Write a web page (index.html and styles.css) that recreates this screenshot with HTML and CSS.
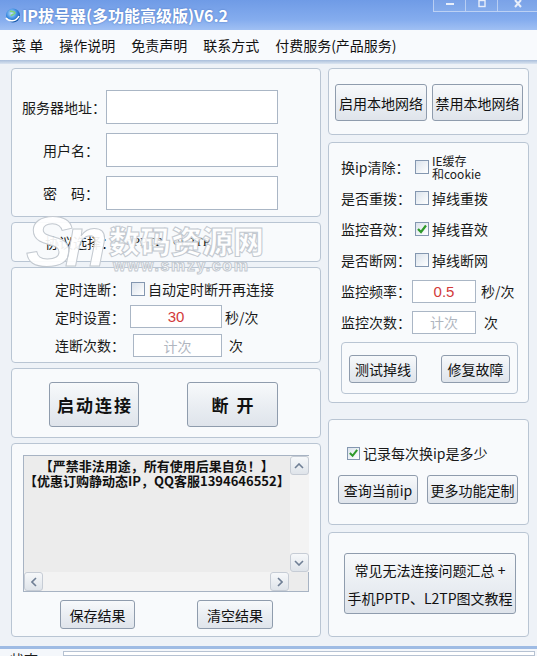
FILE: index.html
```html
<!DOCTYPE html>
<html lang="zh-CN">
<head>
<meta charset="utf-8">
<title>IP拔号器(多功能高级版)V6.2</title>
<link rel="stylesheet" href="styles.css">
</head>
<body>
<div class="window">
  <div class="titlebar">
    <svg class="appicon" viewBox="0 0 18 18" width="18" height="18">
      <defs>
        <radialGradient id="gl" cx="40%" cy="35%" r="65%">
          <stop offset="0" stop-color="#bfe3ff"/>
          <stop offset="0.6" stop-color="#3a8be0"/>
          <stop offset="1" stop-color="#1556a8"/>
        </radialGradient>
      </defs>
      <circle cx="10" cy="9.5" r="7" fill="url(#gl)"/>
      <path d="M3 12 C6 16 13 16 16 10" stroke="#fff" stroke-width="1.6" fill="none"/>
      <path d="M7 5 C9 6 11 5 12 7 C11 9 9 8 8 10" stroke="#7fd37a" stroke-width="1.6" fill="none"/>
    </svg>
    <span class="title">IP拔号器(多功能高级版)V6.2</span>
    <div class="winbtns">
      <span class="wb"><svg viewBox="0 0 12 8" width="12" height="8"><rect x="2" y="3" width="8" height="2" fill="#e8eefa"/></svg></span>
      <span class="wb"><svg viewBox="0 0 12 8" width="12" height="8"><rect x="3" y="0.5" width="6" height="6" fill="none" stroke="#e8eefa" stroke-width="1.4"/></svg></span>
      <span class="wb close"><svg viewBox="0 0 12 8" width="12" height="8"><path d="M3 0 L9 7 M9 0 L3 7" stroke="#e8eefa" stroke-width="2"/></svg></span>
    </div>
  </div>

  <div class="menubar">
    <span class="menu">菜&nbsp;单</span>
    <span class="menu">操作说明</span>
    <span class="menu">免责声明</span>
    <span class="menu">联系方式</span>
    <span class="menu">付费服务(产品服务)</span>
  </div>
  <div class="menushadow"></div>

  <div class="main">
    <div class="col col-left">
      <div class="group g-login">
        <span class="lbl lbl-long">服务器地址：</span><div class="input"></div>
        <span class="lbl lbl-short">用户名：</span><div class="input"></div>
        <span class="lbl lbl-short">密　码：</span><div class="input"></div>
      </div>

      <div class="group g-proto">
        <span class="proto-lbl">协议选择：</span>
        <span class="proto-opt">○PPTP</span>
        <span class="proto-opt">○L2TP</span>
      </div>

      <div class="group g-timer">
        <span class="lbl">定时连断：</span>
        <span class="chkrow span2"><span class="chk"></span><span class="chktext">自动定时断开再连接</span></span>
        <span class="lbl">定时设置：</span>
        <div class="input small red">30</div>
        <span class="unit">秒/次</span>
        <span class="lbl">连断次数：</span>
        <div class="input small gray shift">计次</div>
        <span class="unit unit-ci">次</span>
      </div>

      <div class="group g-connect">
        <button class="btn big b-start">启动连接</button>
        <button class="btn big b-stop">断&nbsp;开</button>
      </div>

      <div class="group g-log">
        <div class="logbox">
          <div class="logtop">
            <div class="logtext">
              <div>【严禁非法用途，所有使用后果自负！】</div>
              <div>【优惠订购静动态IP，QQ客服1394646552】</div>
            </div>
            <div class="vscroll">
              <span class="sbtn"><svg viewBox="0 0 10 6" width="10" height="6"><path d="M1 5 L5 1 L9 5" stroke="#6f7f95" stroke-width="1.6" fill="none"/></svg></span>
              <span class="vtrack"></span>
              <span class="sbtn"><svg viewBox="0 0 10 6" width="10" height="6"><path d="M1 1 L5 5 L9 1" stroke="#6f7f95" stroke-width="1.6" fill="none"/></svg></span>
            </div>
          </div>
          <div class="hscroll">
            <span class="sbtn"><svg viewBox="0 0 6 10" width="6" height="10"><path d="M5 1 L1 5 L5 9" stroke="#6f7f95" stroke-width="1.6" fill="none"/></svg></span>
            <span class="htrack"></span>
            <span class="sbtn"><svg viewBox="0 0 6 10" width="6" height="10"><path d="M1 1 L5 5 L1 9" stroke="#6f7f95" stroke-width="1.6" fill="none"/></svg></span>
            <span class="corner"></span>
          </div>
        </div>
        <div class="logbtns">
          <button class="btn b-save">保存结果</button>
          <button class="btn b-clear">清空结果</button>
        </div>
      </div>
    </div>

    <div class="col col-right">
      <div class="group r-net">
        <button class="btn b-net1">启用本地网络</button>
        <button class="btn b-net2">禁用本地网络</button>
      </div>

      <div class="group r-monitor">
        <div class="mon-grid">
          <span class="lbl">换ip清除：</span>
          <span class="chkrow"><span class="chk"></span><span class="chktext two">IE缓存<br>和cookie</span></span>
          <span class="lbl">是否重拨：</span>
          <span class="chkrow"><span class="chk"></span><span class="chktext">掉线重拨</span></span>
          <span class="lbl">监控音效：</span>
          <span class="chkrow"><span class="chk on"><svg viewBox="0 0 12 12" width="12" height="12"><path d="M2 6 L5 9 L10 2.5" stroke="#2f9a2a" stroke-width="2.2" fill="none"/></svg></span><span class="chktext">掉线音效</span></span>
          <span class="lbl">是否断网：</span>
          <span class="chkrow"><span class="chk"></span><span class="chktext">掉线断网</span></span>
          <span class="lbl">监控频率：</span>
          <span class="ctl"><span class="input tiny red">0.5</span><span class="unit">秒/次</span></span>
          <span class="lbl">监控次数：</span>
          <span class="ctl"><span class="input tiny gray">计次</span><span class="unit unit-ci2">次</span></span>
        </div>
        <div class="inner">
          <button class="btn b-test">测试掉线</button>
          <button class="btn b-fix">修复故障</button>
        </div>
      </div>

      <div class="group r-record">
        <div class="rec-row"><span class="chk on"><svg viewBox="0 0 12 12" width="12" height="12"><path d="M2 6 L5 9 L10 2.5" stroke="#2f9a2a" stroke-width="2.2" fill="none"/></svg></span><span class="chktext">记录每次换ip是多少</span></div>
        <div class="rec-btns">
          <button class="btn b-query">查询当前ip</button>
          <button class="btn b-more">更多功能定制</button>
        </div>
      </div>

      <div class="group r-help">
        <button class="btn b-help">常见无法连接问题汇总 +<br>手机PPTP、L2TP图文教程</button>
      </div>
    </div>
  </div>

  <div class="statusbar">
    <span class="status-lbl">状态</span>
    <div class="status-box"></div>
  </div>

  <div class="wm-logo">Sn</div>
  <div class="wm-name">数码资源网</div>
  <div class="wm-url">www.smzy.com</div>
</div>
</body>
</html>
```

FILE: styles.css
```css
* { box-sizing: border-box; }

body {
  margin: 0;
  background: #eef2f7;
  font-family: "Noto Sans CJK SC", "Noto Sans", sans-serif;
  font-size: 14px;
  color: #1a1a1a;
}

.window {
  position: relative;
  width: 537px;
  height: 656px;
  overflow: hidden;
  background: #eef2f7;
}

/* title bar */
.titlebar {
  height: 30px;
  display: flex;
  align-items: center;
  padding-left: 3px;
  background: linear-gradient(#6f9be6, #84acee 65%, #a0c0f3);
}
.appicon { margin-right: 1px; }
.title {
  color: #fff;
  font-weight: bold;
  font-size: 16px;
  line-height: 20px;
  text-shadow: 0 0 2px #4a74bd;
}
.winbtns {
  margin-left: auto;
  align-self: flex-start;
  display: flex;
  height: 12px;
}
.wb {
  width: 32px;
  height: 12px;
  border: 1px solid rgba(255,255,255,0.45);
  border-top: 0;
  border-right: 0;
  display: flex;
  align-items: flex-start;
  justify-content: center;
  background: rgba(255,255,255,0.08);
}
.wb.close { width: 40px; }

/* menu */
.menubar {
  height: 30px;
  display: flex;
  align-items: center;
  padding-left: 12px;
  gap: 16px;
  background: #f8fafd;
}
.menu { font-size: 14px; line-height: 18px; color: #111; }
.menushadow {
  height: 4px;
  background: linear-gradient(#a9bedb, #dbe5f1);
}

/* main layout */
.main {
  display: flex;
  gap: 7px;
  padding: 4px 0 0 11px;
}
.col { display: flex; flex-direction: column; }
.col-left { width: 310px; }
.col-right { width: 201px; }

.group {
  border: 1px solid #b9c5d3;
  border-radius: 4px;
  background: #f8fafc;
}

.lbl { font-size: 14px; line-height: 18px; align-self: center; white-space: nowrap; }

.input {
  background: #fff;
  border: 1px solid #aab6c5;
  display: flex;
  align-items: center;
  justify-content: center;
  font-size: 14px;
}
.input.red { color: #d23a3a; font-family: "Liberation Sans", sans-serif; font-size: 15px; }
.input.gray { color: #b0b6bf; }

.chkrow { display: flex; align-items: center; }
.chk {
  width: 14px;
  height: 14px;
  border: 1px solid #8497b0;
  background: linear-gradient(135deg, #dbe3ec, #ffffff);
  display: inline-flex;
  align-items: center;
  justify-content: center;
  flex: none;
}
.chktext { margin-left: 3px; font-size: 14px; line-height: 18px; white-space: nowrap; }
.chktext.two { font-size: 12px; line-height: 13px; }

.unit { font-size: 14px; line-height: 18px; align-self: center; margin-left: 3px; }

.btn {
  font-family: "Noto Sans CJK SC", "Noto Sans", sans-serif;
  font-size: 14px;
  color: #111;
  border: 1px solid #8f9cad;
  border-radius: 3px;
  background: linear-gradient(#f7f9fb, #e9edf2 55%, #dfe4eb);
  padding: 0;
  display: flex;
  align-items: center;
  justify-content: center;
}

/* group 1 */
.g-login {
  height: 149px;
  display: grid;
  grid-template-columns: 94px 172px;
  grid-auto-rows: 34px;
  column-gap: 0;
  row-gap: 9px;
  padding-top: 21px;
  align-content: start;
}
.g-login .lbl { justify-self: end; }
.g-login .lbl-short { margin-right: 7px; }
.g-login .input { height: 34px; }

/* group 2 */
.g-proto {
  height: 40px;
  margin-top: 5px;
  display: flex;
  align-items: center;
  padding-left: 33px;
  gap: 10px;
}
.proto-lbl { font-size: 14px; }
.proto-opt { font-size: 13px; font-family: "Liberation Serif", serif; }

/* group 3 */
.g-timer {
  height: 96px;
  margin-top: 5px;
  display: grid;
  grid-template-columns: 75px 92px auto;
  grid-auto-rows: 23px;
  row-gap: 5px;
  padding: 9px 0 0 43px;
  align-content: start;
}
.g-timer .span2 { grid-column: 2 / 4; padding-left: 1px; }
.g-timer .input.small { height: 23px; }
.g-timer .shift { margin: 1px 0 -1px 3px; }
.g-timer .unit-ci { margin-left: 7px; }

/* group 4 */
.g-connect {
  height: 70px;
  margin-top: 5px;
  display: flex;
  gap: 48px;
  padding: 13px 0 0 37px;
}
.btn.big {
  height: 45px;
  font-size: 17px;
  font-weight: bold;
  letter-spacing: 2px;
  padding-left: 2px;
}
.b-start { width: 90px; }
.b-stop { width: 91px; }

/* group 5 */
.g-log {
  height: 194px;
  margin-top: 5px;
  padding: 11px 0 0 11px;
}
.logbox {
  width: 286px;
  height: 137px;
  border: 1px solid #a7b3c3;
  background: #ececec;
  display: flex;
  flex-direction: column;
}
.logtop { flex: 1; display: flex; }
.logtext {
  flex: 1;
  text-align: center;
  font-weight: bold;
  font-size: 13px;
  line-height: 15px;
  padding-top: 2px;
  color: #111;
  white-space: nowrap;
}
.vscroll {
  width: 19px;
  display: flex;
  flex-direction: column;
  background: #f3f3f3;
}
.vtrack { flex: 1; }
.sbtn {
  width: 19px;
  height: 19px;
  flex: none;
  border: 1px solid #c6ccd5;
  border-radius: 3px;
  background: linear-gradient(#f6f8fa, #dfe4ea);
  display: flex;
  align-items: center;
  justify-content: center;
}
.hscroll { height: 19px; display: flex; background: #f3f3f3; }
.htrack { flex: 1; }
.corner { width: 19px; background: #ececec; }

.logbtns {
  display: flex;
  gap: 62px;
  padding-left: 37px;
  margin-top: 8px;
}
.b-save { width: 75px; height: 29px; }
.b-clear { width: 76px; height: 29px; }

/* right column */
.r-net {
  height: 67px;
  display: flex;
  gap: 5px;
  padding: 15px 0 0 6px;
}
.b-net1 { width: 92px; height: 37px; }
.b-net2 { width: 91px; height: 37px; }

.r-monitor {
  height: 261px;
  margin-top: 7px;
  padding: 9px 0 0 12px;
}
.mon-grid {
  display: grid;
  grid-template-columns: 71px auto;
  grid-auto-rows: 30px;
  row-gap: 1px;
}
.mon-grid .chkrow { padding-left: 3px; }
.ctl { display: flex; align-items: center; }
.input.tiny { width: 64px; height: 23px; }
.ctl .unit { margin-left: 5px; }
.ctl .unit-ci2 { margin-left: 8px; }

.inner {
  width: 177px;
  height: 52px;
  margin-top: 5px;
  border: 1px solid #b9c5d3;
  border-radius: 4px;
  display: flex;
  gap: 24px;
  padding: 12px 0 0 7px;
}
.b-test { width: 68px; height: 28px; }
.b-fix { width: 69px; height: 28px; }

.r-record {
  height: 106px;
  margin-top: 16px;
}
.rec-row {
  display: flex;
  align-items: center;
  padding: 24px 0 0 18px;
  height: 42px;
}
.rec-row .chk { width: 13px; height: 13px; }
.rec-btns {
  display: flex;
  gap: 9px;
  padding-left: 9px;
  margin-top: 13px;
}
.b-query { width: 80px; height: 29px; }
.b-more { width: 91px; height: 29px; }

.r-help {
  height: 105px;
  margin-top: 7px;
  padding: 20px 0 0 15px;
}
.b-help {
  width: 172px;
  height: 61px;
  line-height: 28px;
  text-align: center;
}

/* status bar */
.statusbar {
  margin-top: 9px;
  height: 10px;
  border-top: 3px solid #9ebbe4;
  background: #f4f7fb;
  display: flex;
  overflow: hidden;
}
.status-lbl {
  font-size: 14px;
  line-height: 18px;
  margin: 1px 0 0 10px;
  width: 53px;
}
.status-box {
  flex: 1;
  margin-top: 2px;
  margin-right: 2px;
  border: 1px solid #b6c2d2;
  background: #fff;
}

/* watermark overlay */
.wm-logo, .wm-name, .wm-url {
  position: absolute;
  color: rgba(255,255,255,0.92);
  -webkit-text-stroke: 1px #c3c9d0;
  pointer-events: none;
}
.wm-logo {
  left: 26px;
  top: 204px;
  font-family: "Liberation Sans", sans-serif;
  font-size: 70px;
  font-style: italic;
  font-weight: 900;
  letter-spacing: -8px;
  line-height: 76px;
}
.wm-name {
  left: 109px;
  top: 222px;
  font-size: 31px;
  font-weight: 900;
  line-height: 36px;
  letter-spacing: 0;
}
.wm-url {
  left: 113px;
  top: 257px;
  font-family: "Liberation Sans", sans-serif;
  font-size: 16px;
  font-weight: bold;
  letter-spacing: 1.6px;
  line-height: 18px;
}
```
